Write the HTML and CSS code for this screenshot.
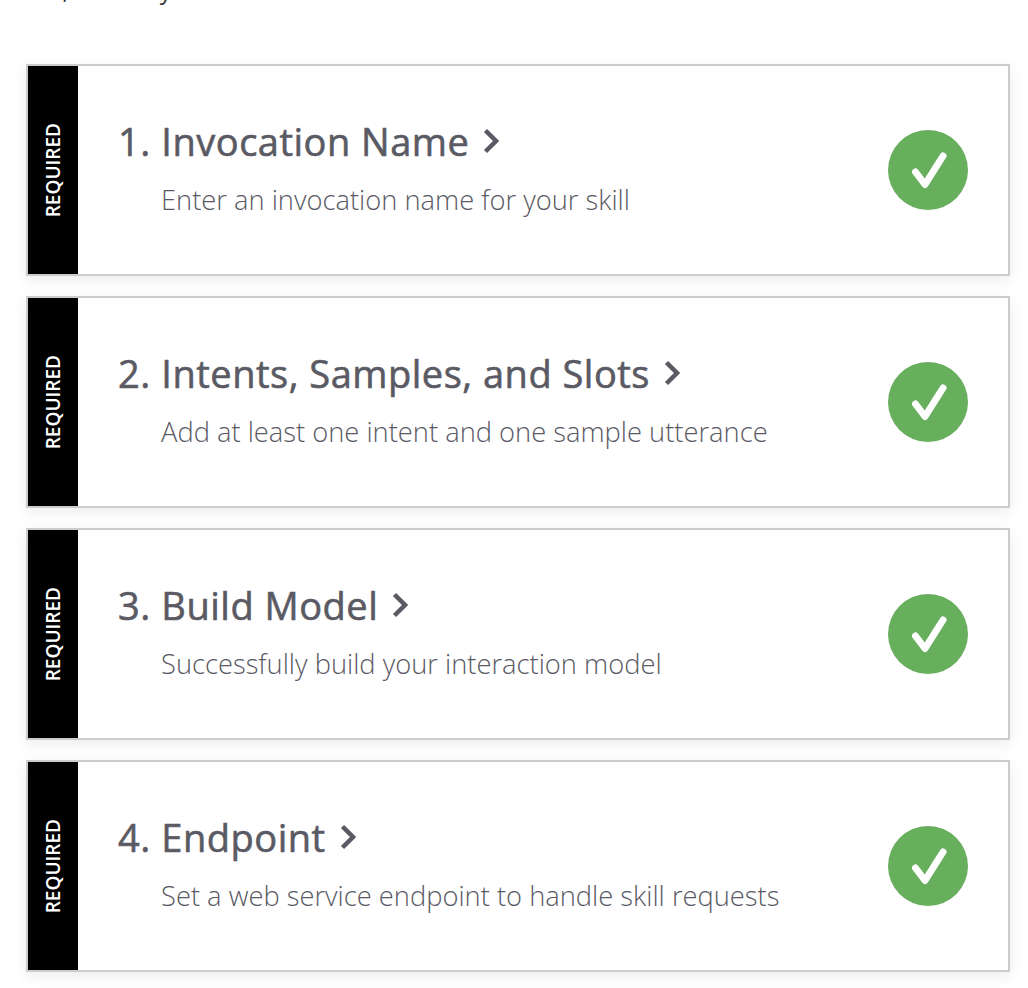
FILE: index.html
```html
<!DOCTYPE html>
<html lang="en">
<head>
    <meta charset="UTF-8">
    <meta name="viewport" content="width=device-width, initial-scale=1.0">
    <title>Skill builder checklist</title>
    <link rel="stylesheet" href="styles.css">
</head>
<body>
    <p class="intro">tab, or with your console to the left.</p>
    <div class="checklist">
        <div class="card">
            <div class="required"><span>REQUIRED</span></div>
            <div class="card-body">
                <h2><span class="num">1.</span> Invocation Name<svg class="chevron" viewBox="0 0 16 26"><path d="M2.500 2.500l10.500 10.500L2.500 23.500"/></svg></h2>
                <p>Enter an invocation name for your skill</p>
            </div>
            <div class="done"><svg viewBox="0 0 80 80"><path d="M27.500 42L37 54.500 55 26"/></svg></div>
        </div>
        <div class="card">
            <div class="required"><span>REQUIRED</span></div>
            <div class="card-body">
                <h2><span class="num">2.</span> Intents, Samples, and Slots<svg class="chevron" viewBox="0 0 16 26"><path d="M2.500 2.500l10.500 10.500L2.500 23.500"/></svg></h2>
                <p>Add at least one intent and one sample utterance</p>
            </div>
            <div class="done"><svg viewBox="0 0 80 80"><path d="M27.500 42L37 54.500 55 26"/></svg></div>
        </div>
        <div class="card">
            <div class="required"><span>REQUIRED</span></div>
            <div class="card-body">
                <h2><span class="num">3.</span> Build Model<svg class="chevron" viewBox="0 0 16 26"><path d="M2.500 2.500l10.500 10.500L2.500 23.500"/></svg></h2>
                <p>Successfully build your interaction model</p>
            </div>
            <div class="done"><svg viewBox="0 0 80 80"><path d="M27.500 42L37 54.500 55 26"/></svg></div>
        </div>
        <div class="card">
            <div class="required"><span>REQUIRED</span></div>
            <div class="card-body">
                <h2><span class="num">4.</span> Endpoint<svg class="chevron" viewBox="0 0 16 26"><path d="M2.500 2.500l10.500 10.500L2.500 23.500"/></svg></h2>
                <p>Set a web service endpoint to handle skill requests</p>
            </div>
            <div class="done"><svg viewBox="0 0 80 80"><path d="M27.500 42L37 54.500 55 26"/></svg></div>
        </div>
    </div>
</body>
</html>
```

FILE: styles.css
```css
html, body {
    height: 988px;
    overflow: hidden;
}
body {
    margin: 0;
    background-color: #fff;
    font-family: "Open Sans", "Noto Sans", sans-serif;
    color: #5a5a64;
}
.intro {
    margin: -26px 0 0 26px;
    height: 90px;
    font-size: 24px;
    line-height: 32px;
    font-weight: 400;
    color: #333;
}
.checklist {
    display: flex;
    flex-direction: column;
    gap: 20px;
    margin: 0 18px 0 26px;
}
.card {
    display: flex;
    align-items: stretch;
    height: 212px;
    box-sizing: border-box;
    border: 2px solid #ccc;
    background-color: #fff;
    box-shadow: 0 4px 14px rgba(0, 0, 0, 0.08);
}
.required {
    display: flex;
    align-items: center;
    justify-content: center;
    flex: 0 0 50px;
    background-color: #000;
    color: #fff;
}
.required span {
    writing-mode: vertical-rl;
    transform: rotate(180deg);
    font-size: 19px;
    font-weight: 600;
}
.card-body {
    flex: 1;
    padding: 51px 0 0 40px;
}
.card-body h2 {
    margin: 0;
    display: flex;
    align-items: center;
    font-size: 38px;
    line-height: 48px;
    font-weight: 400;
    letter-spacing: 0.5px;
    -webkit-text-stroke: 0.6px #5a5a64;
    white-space: pre;
}
.num {
    display: inline-block;
    width: 33px;
}
.chevron {
    width: 16px;
    height: 26px;
    margin-left: 14px;
    fill: none;
    stroke: #5a5a64;
    stroke-width: 4.500;
}
.card-body p {
    margin: 17px 0 0 43px;
    font-size: 27.300px;
    line-height: 36px;
    font-weight: 300;
}
.done {
    align-self: center;
    width: 80px;
    height: 80px;
    margin-right: 40px;
    border-radius: 50%;
    background-color: #67ae5d;
}
.done svg {
    display: block;
    width: 80px;
    height: 80px;
    fill: none;
    stroke: #fff;
    stroke-width: 7;
    stroke-linecap: round;
    stroke-linejoin: round;
}
```
